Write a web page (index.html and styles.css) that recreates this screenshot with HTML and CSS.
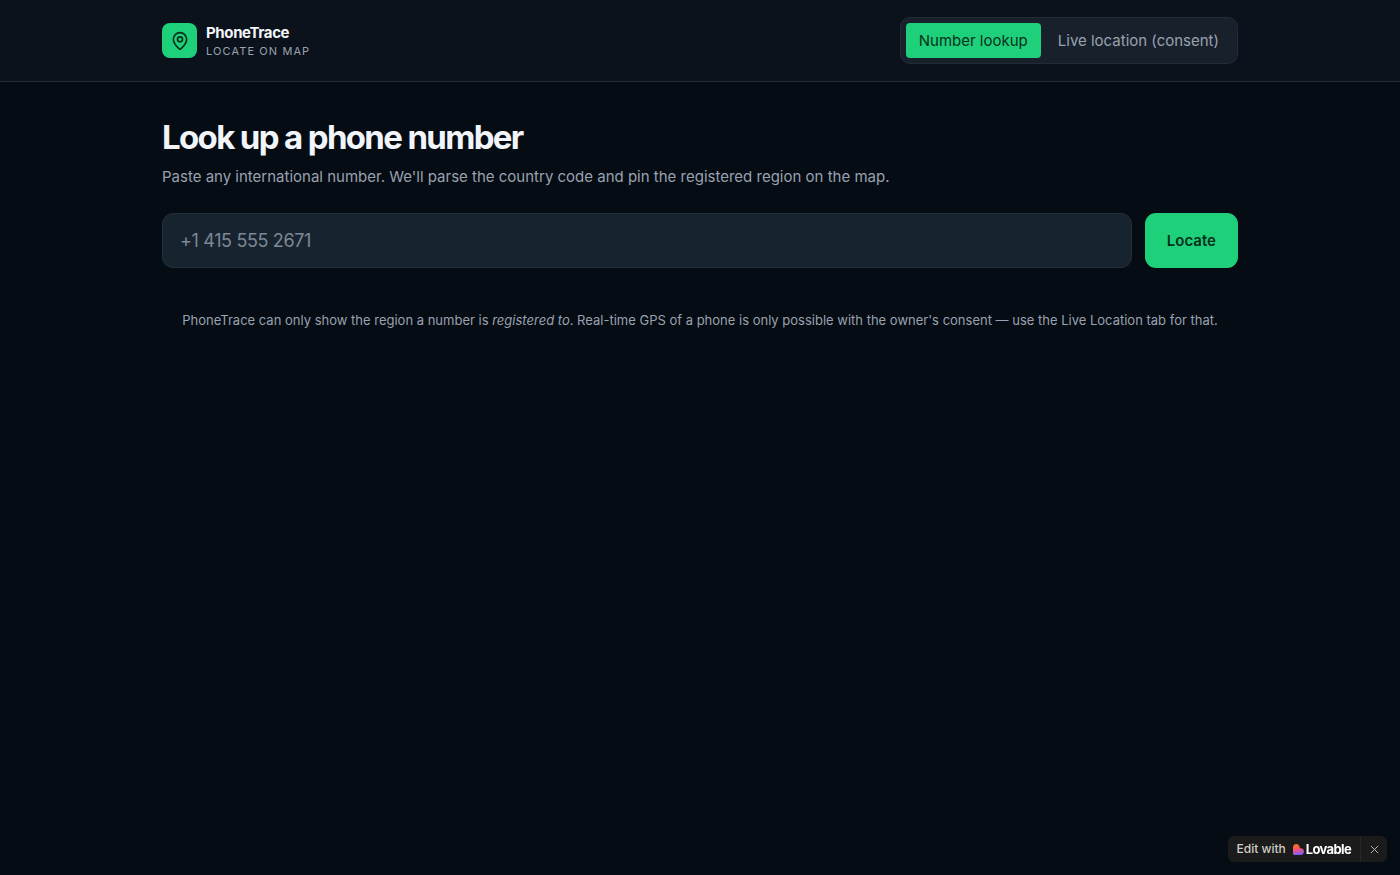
FILE: index.html
```html
<!DOCTYPE html>
<html lang="en">
<head>
<meta charset="utf-8">
<meta name="viewport" content="width=device-width, initial-scale=1">
<title>PhoneTrace</title>
<link rel="stylesheet" href="styles.css">
</head>
<body>
<header class="site-header">
  <div class="container header-row">
    <div class="brand">
      <span class="brand-mark">
        <svg class="pin" viewBox="0 0 24 24" aria-hidden="true"><path d="M20 10c0 4.993-5.539 10.193-7.399 11.799a1 1 0 0 1-1.202 0C9.539 20.193 4 14.993 4 10a8 8 0 0 1 16 0"/><circle cx="12" cy="10" r="3"/></svg>
      </span>
      <div class="brand-text">
        <div class="brand-name">PhoneTrace</div>
        <div class="brand-tag">Locate on map</div>
      </div>
    </div>
    <nav class="tabs">
      <button class="tab tab-active" type="button">Number lookup</button>
      <button class="tab" type="button">Live location (consent)</button>
    </nav>
  </div>
</header>
<main class="container main">
  <h1 class="title">Look up a phone number</h1>
  <p class="subtitle">Paste any international number. We'll parse the country code and pin the registered region on the map.</p>
  <form class="lookup">
    <input class="phone" type="tel" placeholder="+1 415 555 2671" aria-label="Phone number">
    <button class="locate" type="button">Locate</button>
  </form>
  <p class="note">PhoneTrace can only show the region a number is <em>registered to</em>. Real-time GPS of a phone is only possible with the owner's consent — use the Live Location tab for that.</p>
</main>
<aside class="badge">
  <a class="badge-link" href="#">Edit with
    <span class="lovable"><svg class="heart" viewBox="0 0 24 24" aria-hidden="true"><defs><linearGradient id="heart-fill" x1="0.4" y1="0" x2="0.6" y2="1"><stop offset="0.15" stop-color="#ff6a2b"/><stop offset="0.5" stop-color="#f5517c"/><stop offset="0.95" stop-color="#7a5cff"/></linearGradient></defs><path fill="url(#heart-fill)" d="M0 7C0 3 3 0 7 0c3.500 0 6 2 7 5l1 4h2c4 0 7 3.500 7 7.500S21 24 17 24H2c-1 0-2-1-2-2z"/></svg>Lovable</span>
  </a>
  <button class="badge-close" type="button" aria-label="Close"><svg class="cross" viewBox="0 0 10 10" aria-hidden="true"><path d="M1 1l8 8M9 1L1 9"/></svg></button>
</aside>
</body>
</html>
```
FILE: styles.css
```css
* { box-sizing: border-box; }
body {
  margin: 0;
  min-height: 100vh;
  background: #060c14;
  color: #f1f5f9;
  font-family: Inter, "Liberation Sans", sans-serif;
  font-size: 16px;
  line-height: 24px;
}
button, input { font: inherit; color: inherit; }
button { border: 0; background: none; cursor: pointer; }
.container {
  max-width: 1120px;
  margin: 0 auto;
  padding: 0 22px;
}
.site-header {
  background: #0b121c;
  border-bottom: 1px solid #222b36;
}
.header-row {
  display: flex;
  align-items: center;
  justify-content: space-between;
  padding-top: 17px;
  padding-bottom: 17px;
}
.brand { display: flex; align-items: center; gap: 9px; }
.brand-mark {
  display: grid;
  place-items: center;
  width: 35px;
  height: 35px;
  border-radius: 8px;
  background: #1fd07a;
}
.pin {
  width: 20px;
  height: 20px;
  fill: none;
  stroke: #06301c;
  stroke-width: 2;
  stroke-linecap: round;
  stroke-linejoin: round;
}
.brand-text { padding-top: 2px; }
.brand-name {
  font-size: 15px;
  line-height: 20px;
  font-weight: 700;
  letter-spacing: -0.025em;
}
.brand-tag {
  font-size: 11px;
  line-height: 17px;
  letter-spacing: 0.1em;
  text-transform: uppercase;
  color: #99a2b0;
}
.tabs {
  display: flex;
  gap: 4px;
  padding: 5px;
  border: 1px solid #222b36;
  border-radius: 10px;
  background: #18202b;
}
.tab {
  padding: 5px 13px;
  border-radius: 4px;
  font-size: 15px;
  line-height: 25px;
  color: #99a2b0;
}
.tab-active { background: #1fd07a; color: #06301c; }
.main { padding-top: 35px; }
.title {
  margin: 0;
  font-size: 33px;
  line-height: 40px;
  font-weight: 700;
  font-optical-sizing: none;
  letter-spacing: -0.05em;
}
.subtitle {
  margin: 8px 0 0;
  font-size: 15px;
  line-height: 24px;
  color: #99a2b0;
}
.lookup { display: flex; gap: 13px; margin-top: 24px; }
.phone {
  flex: 1;
  min-width: 0;
  height: 55px;
  padding: 0 17px;
  border: 1px solid #22303c;
  border-radius: 11px;
  background: #172430;
  font-size: 18px;
  letter-spacing: -0.02em;
}
.phone::placeholder { color: #7d8896; opacity: 1; }
.locate {
  padding: 0 22px;
  border-radius: 11px;
  background: #1fd07a;
  color: #06301c;
  font-size: 15px;
  font-weight: 600;
}
.note {
  margin: 42px 0 0;
  font-size: 13px;
  line-height: 20px;
  text-align: center;
  color: #99a2b0;
}
.badge {
  position: fixed;
  right: 13px;
  bottom: 13px;
  display: flex;
  height: 26px;
  border-radius: 6px;
  background: #1b1b1b;
  font-size: 12px;
  line-height: 26px;
}
.badge-link {
  display: flex;
  gap: 7px;
  padding: 0 9px;
  color: #d0cdc6;
  font-weight: 500;
  text-decoration: none;
}
.lovable {
  display: flex;
  align-items: center;
  gap: 2px;
  color: #ffffff;
  font-size: 13px;
  font-weight: 700;
  letter-spacing: -0.05em;
}
.heart { width: 11px; height: 11px; }
.badge-close {
  display: grid;
  place-items: center;
  width: 27px;
  padding: 0;
  border-left: 1px solid #272727;
}
.cross { width: 9px; height: 9px; fill: none; stroke: #c8c5be; stroke-width: 1; }
```
